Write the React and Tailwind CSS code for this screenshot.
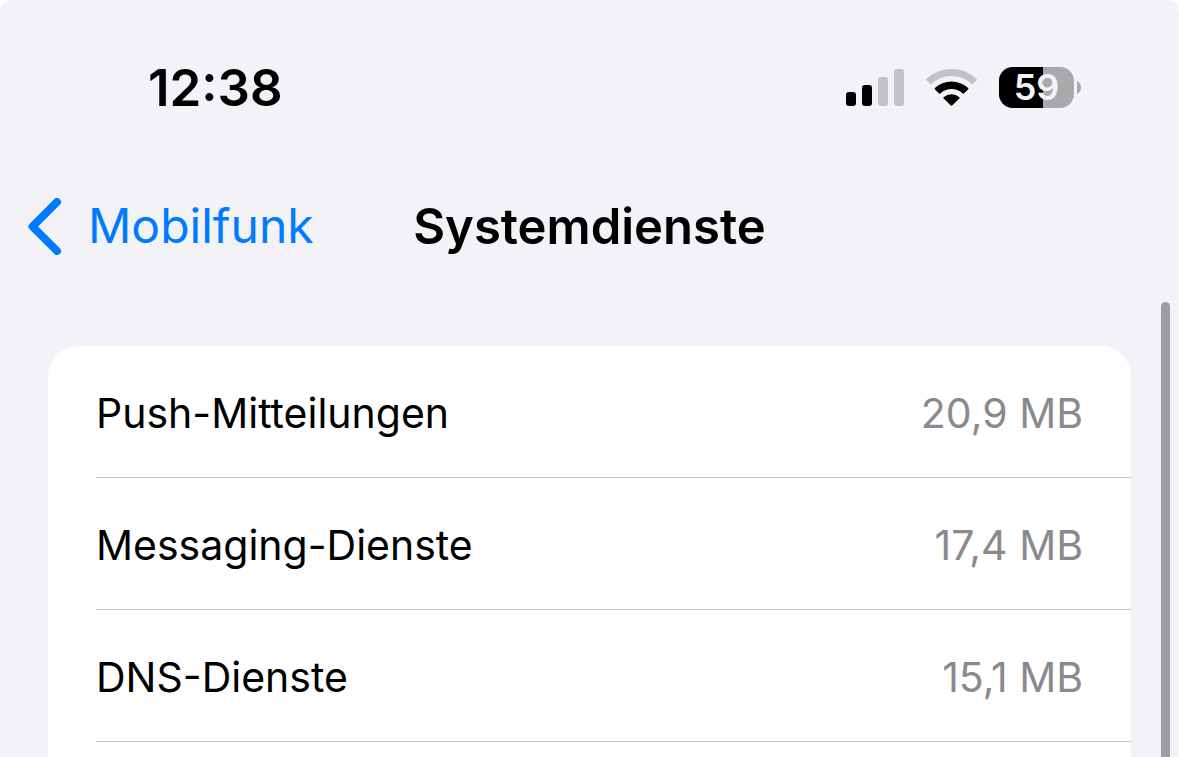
import React from 'react';

const services = [
  { name: 'Push-Mitteilungen', usage: '20,9 MB' },
  { name: 'Messaging-Dienste', usage: '17,4 MB' },
  { name: 'DNS-Dienste', usage: '15,1 MB' },
];

function SignalIcon() {
  return (
    <svg width="58" height="37" viewBox="0 0 58 37" role="img" aria-label="Signal">
      <rect x="0" y="23" width="10" height="14" rx="3" fill="#000" />
      <rect x="16" y="16" width="10" height="21" rx="3" fill="#000" />
      <rect x="32" y="8" width="10" height="29" rx="3" fill="#c2c2c7" />
      <rect x="48" y="0" width="10" height="37" rx="3" fill="#c2c2c7" />
    </svg>
  );
}

function WifiIcon() {
  return (
    <svg width="51" height="37" viewBox="0 0 51 37" strokeWidth="1.6" strokeLinejoin="round" role="img" aria-label="WLAN">
      <path
        d="M0.9 10.6A35.7 35.7 0 0 1 50.1 10.6L46.2 14.5A30 30 0 0 0 4.8 14.5Z"
        fill="#c2c2c7"
        stroke="#c2c2c7"
      />
      <path d="M9.4 19.6A23.5 23.5 0 0 1 41.6 19.6L37.4 24A17.2 17.2 0 0 0 13.6 24Z" fill="#000" stroke="#000" />
      <path d="M18.2 28.9A10.8 10.8 0 0 1 32.8 28.9L25.5 36Z" fill="#000" stroke="#000" />
    </svg>
  );
}

function Battery({ level }) {
  return (
    <div className="flex items-center gap-[3px]">
      <div className="relative flex h-[41px] w-[75px] items-center justify-center overflow-hidden rounded-[14px] bg-[#a9a9ad]">
        <div className="absolute inset-y-0 left-0 bg-black" style={{ width: `${level}%` }} />
        <span className="relative text-[36px] leading-none font-semibold text-[#f2f2f7]">{level}</span>
      </div>
      <svg width="4" height="13" viewBox="0 0 4 13" aria-hidden="true">
        <path d="M0 0C2.6 1.2 4 3.6 4 6.5S2.6 11.8 0 13Z" fill="#a9a9ad" />
      </svg>
    </div>
  );
}

export default function App() {
  return (
    <div className="relative flex h-screen flex-col overflow-hidden rounded-t-xl bg-[#f2f2f7] font-['Inter',sans-serif] text-black">
      <div className="flex h-[174px] shrink-0 items-center justify-between pr-[98px] pl-[148px]">
        <time className="text-[51px] leading-none font-semibold">12:38</time>
        <div className="flex items-center gap-[22px]">
          <SignalIcon />
          <WifiIcon />
          <Battery level={59} />
        </div>
      </div>

      <header className="grid h-[104px] shrink-0 grid-cols-[1fr_auto_1fr] items-center px-7">
        <a href="#mobilfunk" className="flex items-center gap-[26px] text-[48px] leading-none text-[#007aff]">
          <svg width="34" height="57" viewBox="0 0 34 57" fill="none" aria-hidden="true">
            <path
              d="M29 4L4.5 28.5L29 53"
              stroke="currentColor"
              strokeWidth="8"
              strokeLinecap="round"
              strokeLinejoin="round"
            />
          </svg>
          Mobilfunk
        </a>
        <h1 className="text-[49px] leading-none font-semibold">Systemdienste</h1>
      </header>

      <main className="flex flex-1 flex-col px-12 pt-[68px]">
        <ul className="flex-1 rounded-t-[30px] bg-white pl-12">
          {services.map(({ name, usage }) => (
            <li
              key={name}
              className="flex h-[132px] items-center justify-between border-b border-[#c6c6c8] pt-1 pr-12 text-[41px]"
            >
              <span>{name}</span>
              <span className="text-[#8a8a8e]">{usage}</span>
            </li>
          ))}
        </ul>
      </main>

      {/* scroll indicator */}
      <div className="absolute top-[302px] right-[9px] bottom-0 w-[9px] rounded-t-full bg-[#9c9ca1]" />
    </div>
  );
}
